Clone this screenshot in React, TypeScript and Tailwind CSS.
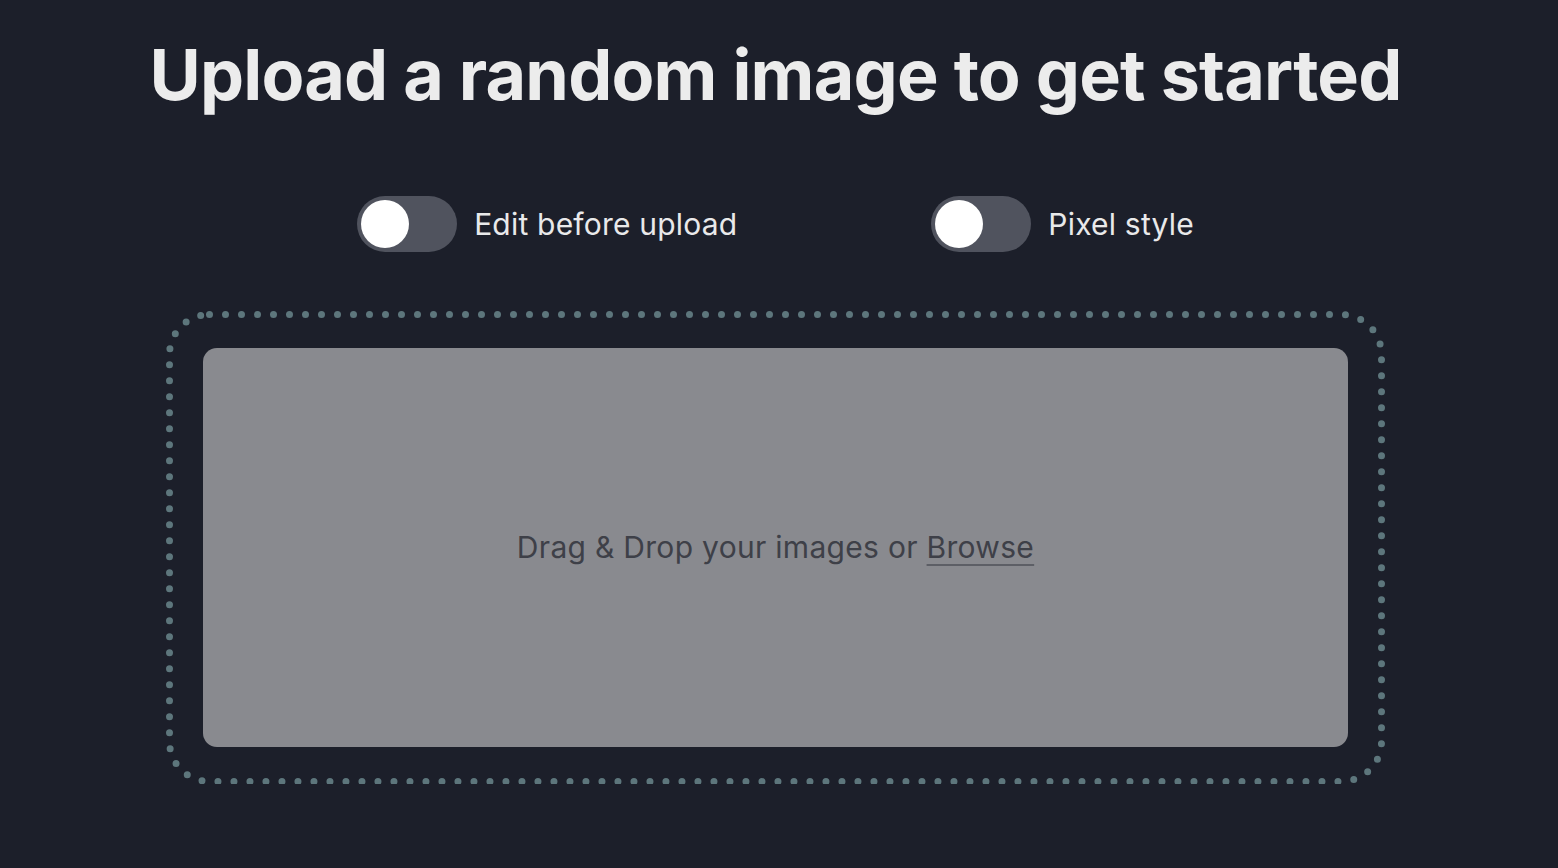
import { useState } from "react";

function Toggle({ label }: { label: string }) {
  const [on, setOn] = useState(false);
  return (
    <label className="flex items-center gap-[17px] cursor-pointer">
      <button
        type="button"
        onClick={() => setOn(!on)}
        className={`flex h-[56px] w-[100px] items-center rounded-full p-[4px] ${
          on ? "justify-end bg-[#6b7f86]" : "justify-start bg-[#50535e]"
        }`}
      >
        <span className="size-[48px] rounded-full bg-white" />
      </button>
      <span className="text-[30px] tracking-[0.2px] text-[#e9e9ea]">{label}</span>
    </label>
  );
}

export default function App() {
  return (
    <div className="min-h-screen bg-[#1c1f2a] pr-[7px] font-['Inter',sans-serif]">
      <h1 className="pt-[40px] text-center text-[70px] font-bold leading-none tracking-[-0.8px] text-[#ececec]">
        Upload a random image to get started
      </h1>

      <div className="mt-[86px] flex justify-center gap-[194px]">
        <Toggle label="Edit before upload" />
        <Toggle label="Pixel style" />
      </div>

      <div className="relative mx-auto mt-[59px] w-[1219px] p-[37px]">
        <svg className="pointer-events-none absolute inset-0 h-full w-full">
          <rect
            x="3.5"
            y="3.5"
            width="1212"
            height="467"
            rx="40"
            fill="none"
            stroke="#5d767c"
            strokeWidth="7"
            strokeLinecap="round"
            strokeDasharray="0 16"
          />
        </svg>
        <div className="flex h-[399px] items-center justify-center rounded-[14px] bg-[#898a8f]">
          <p className="text-[30px] tracking-[0.3px] text-[#3e4048]">
            Drag &amp; Drop your images or{" "}
            <span className="underline decoration-[#5d5f66] decoration-2 underline-offset-[6px]">
              Browse
            </span>
          </p>
        </div>
      </div>
    </div>
  );
}
